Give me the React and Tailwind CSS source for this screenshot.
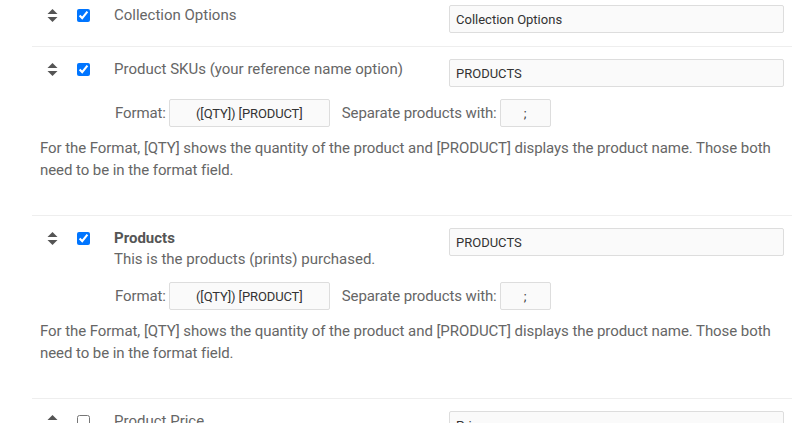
import React from 'react';

const SortIcon = () => (
    <svg width="11" height="13" viewBox="0 0 11 13" className="text-[#555]">
        <path d="M5.5 0 L10.5 5 L0.5 5 Z" fill="currentColor" />
        <path d="M0.5 8 L10.5 8 L5.5 13 Z" fill="currentColor" />
    </svg>
);

const FormatRow = () => (
    <div className="flex items-center mt-[12px] ml-[83px] text-[15px] tracking-[-0.12px] text-[#666]">
        <span>Format:</span>
        <input
            readOnly
            value="([QTY]) [PRODUCT]"
            className="ml-[3px] w-[161px] h-[28px] border border-[#ddd] rounded-[2px] bg-[#fafafa] text-[13px] text-[#333] text-center outline-none"
        />
        <span className="ml-[12px]">Separate products with:</span>
        <input
            readOnly
            value=";"
            className="ml-[3px] w-[51px] h-[28px] border border-[#ddd] rounded-[2px] bg-[#fafafa] text-[13px] text-[#333] text-center outline-none"
        />
    </div>
);

const Help = () => (
    <p className="mt-[10px] mb-[21px] pl-[8px] pr-[10px] text-[15px] tracking-[-0.07px] leading-[22px] text-[#666]">
        For the Format, [QTY] shows the quantity of the product and [PRODUCT] displays the product name. Those both need to be in the format field.
    </p>
);

const FieldRow = ({ checked, label, bold, desc, value, children }) => (
    <div className="border-b border-[#eee] pt-[12px] pb-[13px]">
        <div className="flex items-start pl-[15px] pr-[8px]">
            <div className="h-[21px] flex items-center">
                <SortIcon />
            </div>
            <div className="h-[21px] flex items-center ml-[19px]">
                <input type="checkbox" defaultChecked={checked} className="w-[13px] h-[13px] m-0" />
            </div>
            <div className="ml-[24px] w-[335px] text-[15px] leading-[21px] text-[#666]">
                <div className={bold ? 'font-bold text-[#555]' : ''}>{label}</div>
                {desc && <div>{desc}</div>}
            </div>
            <input
                readOnly
                value={value}
                className="w-[335px] h-[28px] border border-[#ddd] rounded-[2px] bg-[#fafafa] px-[6px] text-[13px] text-[#333] outline-none"
            />
        </div>
        {children}
    </div>
);

const App = () => {
    return (
        <div className="bg-white min-h-screen overflow-hidden" style={{ fontFamily: 'Roboto, "Liberation Sans", sans-serif' }}>
            <div className="ml-[32px] w-[760px] -mt-[7px]">
                <FieldRow checked label="Collection Options" value="Collection Options" />
                <FieldRow checked label="Product SKUs (your reference name option)" value="PRODUCTS">
                    <FormatRow />
                    <Help />
                </FieldRow>
                <FieldRow checked bold label="Products" desc="This is the products (prints) purchased." value="PRODUCTS">
                    <FormatRow />
                    <Help />
                </FieldRow>
                <FieldRow label="Product Price" value="Price" />
            </div>
        </div>
    );
};

export default App;
